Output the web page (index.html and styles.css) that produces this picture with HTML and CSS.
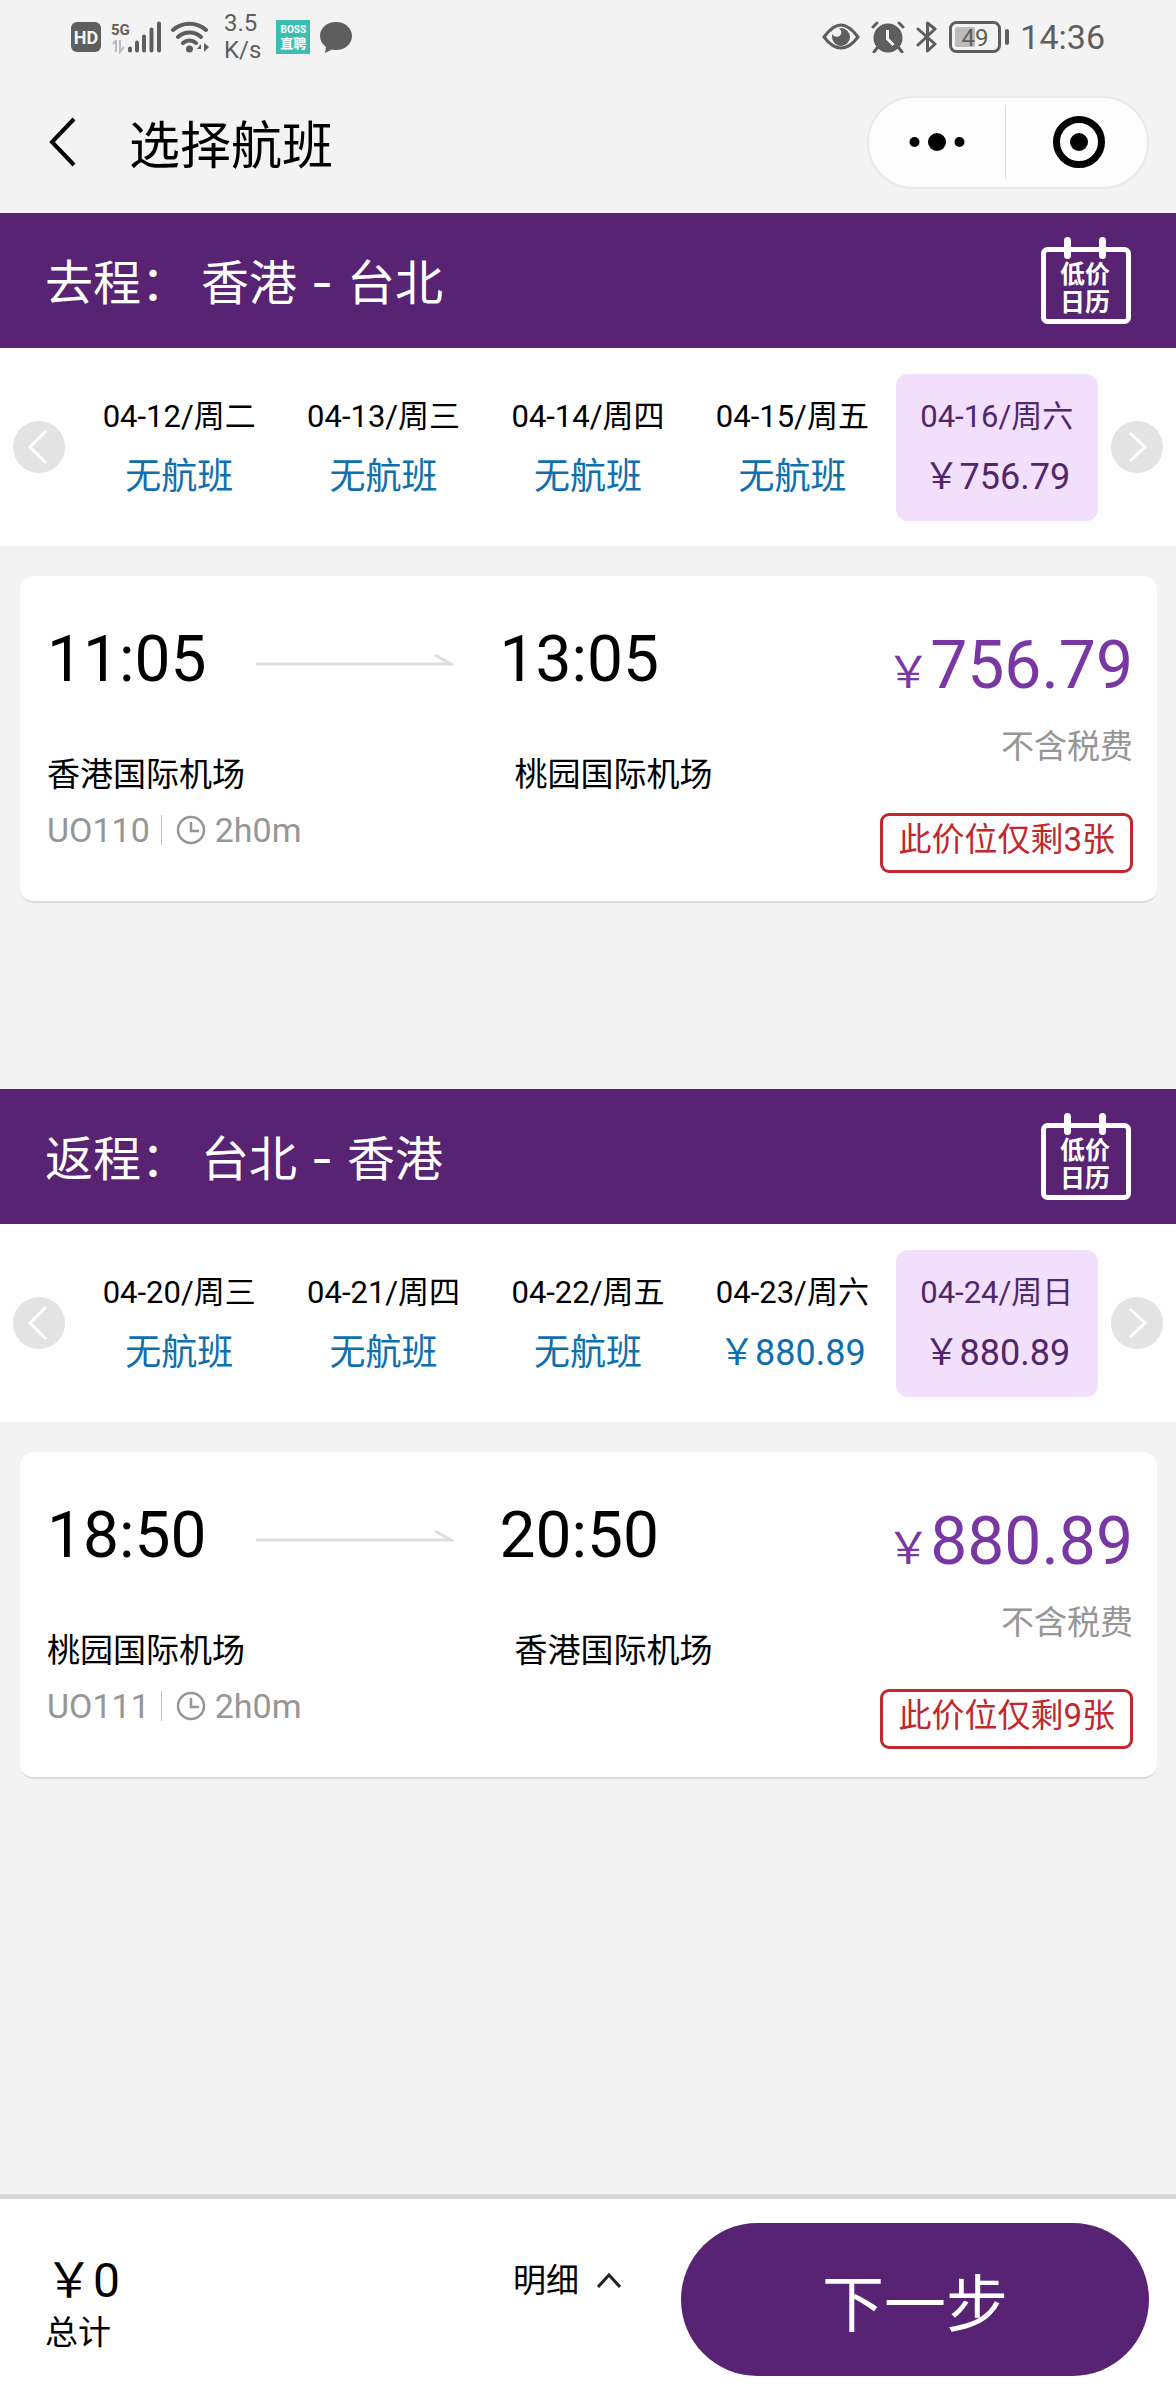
FILE: index.html
```html
<!DOCTYPE html>
<html lang="zh-CN">
<head>
<meta charset="utf-8">
<meta name="viewport" content="width=device-width, initial-scale=1">
<title>选择航班</title>
<link rel="stylesheet" href="styles.css">
</head>
<body>
<svg class="defs" aria-hidden="true">
  <symbol id="prev" viewBox="0 0 52 52">
    <circle cx="26" cy="26" r="26" fill="#e3e3e3"/>
    <path d="M33 10L17 26l16 16" fill="none" stroke="#fff" stroke-width="3"/>
  </symbol>
  <symbol id="next" viewBox="0 0 52 52">
    <circle cx="26" cy="26" r="26" fill="#e3e3e3"/>
    <path d="M19 12l15 14-15 14" fill="none" stroke="#fff" stroke-width="3"/>
  </symbol>
  <symbol id="arrow" viewBox="0 0 198 14">
    <path d="M0 11h195L179 2" fill="none" stroke="#dedede" stroke-width="3"/>
  </symbol>
  <symbol id="clock" viewBox="0 0 30 30">
    <circle cx="15" cy="15" r="13" fill="none" stroke="currentColor" stroke-width="2.500"/>
    <path d="M15 7v9h8" fill="none" stroke="currentColor" stroke-width="2.500"/>
  </symbol>
</svg>

<div class="status">
  <div class="status-left">
    <svg width="30" height="30" viewBox="0 0 30 30"><rect width="30" height="30" rx="6" fill="#5e5e5e"/><text x="15" y="22" text-anchor="middle" class="hd-text">HD</text></svg>
    <svg width="50" height="34" viewBox="0 0 50 34">
      <text x="0" y="15" class="g-text">5G</text>
      <path d="M5 20v12M2 24l3-4M9 20v12l4-5" stroke="#bbb" stroke-width="2" fill="none"/>
      <path d="M19 28.500v2M26 22.500v8M33 16.500v14M40.500 9.500v21M48 3.500v27" stroke="#5e5e5e" stroke-width="4" stroke-linecap="round"/>
    </svg>
    <svg width="38" height="32" viewBox="0 0 38 32">
      <path d="M2 9a25 25 0 0 1 33 0M7 16a17 17 0 0 1 23 0M12 22a10 10 0 0 1 13 0" fill="none" stroke="#5e5e5e" stroke-width="4" stroke-linecap="round"/>
      <circle cx="18.500" cy="28" r="3.500" fill="#5e5e5e"/>
      <path d="M30 31v-8l-4 5h4M33 22v9l5-5z" fill="#5e5e5e"/>
    </svg>
    <div class="speed">3.5<br>K/s</div>
    <div class="boss"><span>BOSS</span><span>直聘</span></div>
    <svg width="32" height="31" viewBox="0 0 32 31"><path d="M16 0c9 0 16 6 16 14s-7 14-16 14c-1 0-3 0-4-.5L5 31l1-6C2 22 0 18 0 14 0 6 7 0 16 0z" fill="#5e5e5e"/></svg>
  </div>
  <div class="status-right">
    <svg width="38" height="28" viewBox="0 0 38 28">
      <path d="M2 14C8 6 13 2 19 2s11 4 17 12c-6 8-11 11-17 11S8 22 2 14z" fill="none" stroke="#5e5e5e" stroke-width="3"/>
      <path d="M19 5a9 9 0 1 1-9 9c0-1 0-2 .5-3 1 3 6 4 8 1 1.500-2 1-5-1.500-6.500z" fill="#5e5e5e"/>
    </svg>
    <svg width="34" height="32" viewBox="0 0 34 32">
      <circle cx="17" cy="17" r="14.500" fill="#5e5e5e"/>
      <path d="M2 6l4-4M32 6l-4-4M6 27l-3 4M28 27l3 4" stroke="#5e5e5e" stroke-width="3" stroke-linecap="round"/>
      <path d="M16.500 9v9l6 6" fill="none" stroke="#f4f4f4" stroke-width="3"/>
    </svg>
    <svg width="22" height="34" viewBox="0 0 22 34"><path d="M2 9l17 15-7.500 7V3L19 9 2 25" fill="none" stroke="#5e5e5e" stroke-width="3" stroke-linecap="round" stroke-linejoin="round"/></svg>
    <svg width="60" height="32" viewBox="0 0 60 32">
      <rect x="1.500" y="1.500" width="49" height="29" rx="6" fill="none" stroke="#5e5e5e" stroke-width="3"/>
      <rect x="6" y="6" width="20" height="20" rx="2" fill="#bcbcbc"/>
      <rect x="56" y="8" width="4" height="16" rx="2" fill="#5e5e5e"/>
      <text x="26" y="25" text-anchor="middle" class="bat-text">49</text>
    </svg>
    <time>14:36</time>
  </div>
</div>

<header class="nav">
  <button class="back" type="button" aria-label="返回"><svg width="28" height="50" viewBox="0 0 28 50"><path d="M25 2L3 25l22 23" fill="none" stroke="#000" stroke-width="4"/></svg></button>
  <h1>选择航班</h1>
  <div class="capsule">
    <button type="button" aria-label="更多"><svg width="56" height="20" viewBox="0 0 56 20"><circle cx="5.500" cy="10" r="5"/><circle cx="28" cy="10" r="9"/><circle cx="50.500" cy="10" r="5"/></svg></button>
    <button type="button" aria-label="关闭"><svg width="52" height="52" viewBox="0 0 52 52"><circle cx="26" cy="26" r="22.500" fill="none" stroke="#000" stroke-width="7"/><circle cx="26" cy="26" r="9"/></svg></button>
  </div>
</header>

<main>
  <section class="leg">
    <div class="leg-head">
      <h2><span>去程：</span><span>香港</span><span class="dash">-</span><span>台北</span></h2>
      <button type="button" class="calendar" aria-label="低价日历">
        <svg width="90" height="87" viewBox="0 0 90 87">
          <rect x="2.500" y="12.500" width="85" height="72" rx="4" fill="none" stroke="currentColor" stroke-width="5"/>
          <path d="M26.500 3.500v15M61.500 3.500v15" stroke="currentColor" stroke-width="7" stroke-linecap="round"/>
          <text x="44" y="46" text-anchor="middle" class="cal-text">低价</text>
          <text x="44" y="74" text-anchor="middle" class="cal-text">日历</text>
        </svg>
      </button>
    </div>
    <div class="dates">
      <button type="button" class="step" aria-label="前一天"><svg width="52" height="52"><use href="#prev"/></svg></button>
      <div class="days">
        <button type="button" class="day"><span>04-12/周二</span><b>无航班</b></button>
        <button type="button" class="day"><span>04-13/周三</span><b>无航班</b></button>
        <button type="button" class="day"><span>04-14/周四</span><b>无航班</b></button>
        <button type="button" class="day"><span>04-15/周五</span><b>无航班</b></button>
        <button type="button" class="day selected"><span>04-16/周六</span><b>￥756.79</b></button>
      </div>
      <button type="button" class="step" aria-label="后一天"><svg width="52" height="52"><use href="#next"/></svg></button>
    </div>
    <article class="card">
      <div class="from">
        <div class="time">11:05<svg width="198" height="14"><use href="#arrow"/></svg></div>
        <div class="airport">香港国际机场</div>
        <div class="meta"><span>UO110</span><span class="dur"><svg width="30" height="30"><use href="#clock"/></svg>2h0m</span></div>
      </div>
      <div class="to">
        <div class="time">13:05</div>
        <div class="airport">桃园国际机场</div>
      </div>
      <div class="fare">
        <div class="price"><span>￥</span>756.79</div>
        <div class="tax">不含税费</div>
        <div class="left">此价位仅剩3张</div>
      </div>
    </article>
  </section>

  <section class="leg">
    <div class="leg-head">
      <h2><span>返程：</span><span>台北</span><span class="dash">-</span><span>香港</span></h2>
      <button type="button" class="calendar" aria-label="低价日历">
        <svg width="90" height="87" viewBox="0 0 90 87">
          <rect x="2.500" y="12.500" width="85" height="72" rx="4" fill="none" stroke="currentColor" stroke-width="5"/>
          <path d="M26.500 3.500v15M61.500 3.500v15" stroke="currentColor" stroke-width="7" stroke-linecap="round"/>
          <text x="44" y="46" text-anchor="middle" class="cal-text">低价</text>
          <text x="44" y="74" text-anchor="middle" class="cal-text">日历</text>
        </svg>
      </button>
    </div>
    <div class="dates">
      <button type="button" class="step" aria-label="前一天"><svg width="52" height="52"><use href="#prev"/></svg></button>
      <div class="days">
        <button type="button" class="day"><span>04-20/周三</span><b>无航班</b></button>
        <button type="button" class="day"><span>04-21/周四</span><b>无航班</b></button>
        <button type="button" class="day"><span>04-22/周五</span><b>无航班</b></button>
        <button type="button" class="day"><span>04-23/周六</span><b>￥880.89</b></button>
        <button type="button" class="day selected"><span>04-24/周日</span><b>￥880.89</b></button>
      </div>
      <button type="button" class="step" aria-label="后一天"><svg width="52" height="52"><use href="#next"/></svg></button>
    </div>
    <article class="card">
      <div class="from">
        <div class="time">18:50<svg width="198" height="14"><use href="#arrow"/></svg></div>
        <div class="airport">桃园国际机场</div>
        <div class="meta"><span>UO111</span><span class="dur"><svg width="30" height="30"><use href="#clock"/></svg>2h0m</span></div>
      </div>
      <div class="to">
        <div class="time">20:50</div>
        <div class="airport">香港国际机场</div>
      </div>
      <div class="fare">
        <div class="price"><span>￥</span>880.89</div>
        <div class="tax">不含税费</div>
        <div class="left">此价位仅剩9张</div>
      </div>
    </article>
  </section>
</main>

<footer class="bar">
  <div class="total"><strong>￥0</strong><span>总计</span></div>
  <button type="button" class="detail">明细<svg width="24" height="16" viewBox="0 0 24 16"><path d="M1 14L12 2l11 12" fill="none" stroke="#222" stroke-width="3"/></svg></button>
  <button type="button" class="submit">下一步</button>
</footer>
</body>
</html>
```
FILE: styles.css
```css
* {
  box-sizing: border-box;
}

body {
  margin: 0;
  min-height: 100vh;
  display: flex;
  flex-direction: column;
  background: #f3f3f4;
  color: #000;
  font-family: Roboto, "Noto Sans CJK SC", sans-serif;
  font-size: 33px;
}

button {
  margin: 0;
  padding: 0;
  border: 0;
  background: none;
  color: inherit;
  font: inherit;
  cursor: pointer;
}

svg {
  display: block;
  flex: none;
}

.defs {
  position: absolute;
  width: 0;
  height: 0;
}

/* Status bar */
.status {
  display: flex;
  justify-content: space-between;
  align-items: center;
  height: 74px;
  padding: 0 71px;
  color: #5e5e5e;
}

.status-left,
.status-right {
  display: flex;
  align-items: center;
  gap: 10px;
}

.status-right {
  gap: 11px;
}

.status time {
  font-size: 34px;
}

.speed {
  margin: 0 5px;
  font-size: 24px;
  line-height: 27px;
}

.boss {
  display: flex;
  flex-direction: column;
  align-items: center;
  justify-content: center;
  width: 34px;
  height: 34px;
  background: #3dbdb2;
  color: #fff;
  font-size: 10px;
  font-weight: 700;
  line-height: 12px;
}

.boss span + span {
  font-size: 13px;
  line-height: 15px;
}

.hd-text {
  fill: #f4f4f4;
  font-size: 18px;
  font-weight: 700;
}

.g-text {
  fill: #5e5e5e;
  font-size: 15px;
  font-weight: 700;
}

.bat-text {
  fill: #5e5e5e;
  font-size: 24px;
}

/* Title bar */
.nav {
  display: flex;
  align-items: center;
  height: 139px;
  padding: 0 27px 3px 49px;
}

.nav h1 {
  margin: 0 auto 0 52px;
  font-size: 51px;
  font-weight: 400;
}

.capsule {
  display: flex;
  align-items: center;
  width: 282px;
  height: 93px;
  border: 2px solid #e9e9e9;
  border-radius: 47px;
  background: #fdfdfd;
}

.capsule button {
  display: flex;
  flex: 1;
  align-items: center;
  justify-content: center;
  height: 74px;
}

.capsule button + button {
  padding-left: 6px;
  border-left: 1px solid #ddd;
}

/* One direction of the trip */
.leg {
  padding-bottom: 186px;
}

.leg:last-child {
  padding-bottom: 32px;
}

.leg-head {
  display: flex;
  align-items: center;
  justify-content: space-between;
  height: 135px;
  padding: 0 45px;
  background: #582373;
  color: #fff;
}

.leg-head h2 {
  display: flex;
  align-items: baseline;
  margin: 0;
  padding-bottom: 3px;
  font-size: 48px;
  font-weight: 400;
}

.leg-head h2 span:first-child {
  margin-right: 12px;
}

.leg-head .dash {
  padding: 0 14px;
  font-family: Inter, sans-serif;
}

.cal-text {
  fill: #fff;
  font-size: 25px;
  font-weight: 700;
}

.dates {
  display: flex;
  align-items: center;
  gap: 13px;
  height: 198px;
  padding: 0 13px;
  background: #fefefe;
}

.days {
  display: grid;
  grid-template-columns: repeat(5, 1fr);
  gap: 2px;
  flex: 1;
}

.day {
  display: flex;
  flex-direction: column;
  align-items: center;
  height: 147px;
  padding-top: 16px;
  border-radius: 12px;
  font-size: 31px;
  line-height: 54px;
}

.day b {
  color: #0f6fae;
  font-size: 36px;
  font-weight: 400;
  line-height: 66px;
}

.day.selected {
  background: #f1dffb;
  color: #50286a;
}

.day.selected b {
  color: #50286a;
}

.card {
  display: grid;
  grid-template-columns: 5fr 3fr 4fr;
  margin: 30px 19px 0 20px;
  padding: 44px 24px 28px 27px;
  border-bottom: 2px solid #dcdcdc;
  border-radius: 14px;
  background: #fefefe;
}

.time {
  display: flex;
  align-items: center;
  gap: 50px;
  font-size: 64px;
  line-height: 80px;
}

.airport {
  margin-top: 51px;
  line-height: 48px;
}

.to .airport {
  padding-left: 15px;
}

.meta {
  display: flex;
  align-items: center;
  margin-top: 11px;
  color: #969696;
  font-size: 34px;
  line-height: 40px;
}

.dur {
  display: flex;
  align-items: center;
  gap: 9px;
  margin-left: 11px;
  padding-left: 14px;
  border-left: 1px solid #c4c4c4;
  line-height: 30px;
}

.fare {
  display: flex;
  flex-direction: column;
  align-items: flex-end;
  padding-top: 6px;
}

.price {
  color: #7937a3;
  font-size: 66px;
  line-height: 80px;
}

.price span {
  font-size: 44px;
  line-height: 44px;
}

.tax {
  margin-top: 21px;
  color: #969696;
  line-height: 40px;
}

.left {
  margin-top: 46px;
  padding: 0 15px 6px;
  border: 3px solid #c1272d;
  border-radius: 9px;
  color: #c1272d;
  line-height: 48px;
}

/* Bottom bar */
.bar {
  position: sticky;
  bottom: 0;
  display: flex;
  align-items: flex-start;
  margin-top: auto;
  padding: 24px 27px 24px 45px;
  border-top: 5px solid #d8d8d8;
  background: #fefefe;
}

.total {
  display: flex;
  flex-direction: column;
  margin: 28px auto 0 0;
  line-height: 44px;
}

.total strong {
  font-size: 48px;
  font-weight: 400;
  line-height: 60px;
}

.detail {
  display: flex;
  align-items: center;
  gap: 18px;
  margin: 28px 60px 0 0;
  line-height: 60px;
}

.submit {
  width: 468px;
  height: 153px;
  border-radius: 77px;
  background: #582373;
  color: #fff;
  font-size: 62px;
}
```
